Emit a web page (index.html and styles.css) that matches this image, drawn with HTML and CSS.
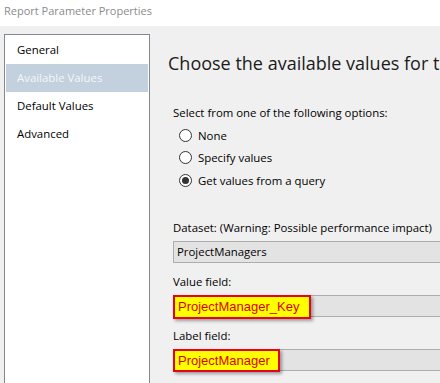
FILE: index.html
```html
<!DOCTYPE html>
<html>
<head>
<meta charset="utf-8">
<link rel="stylesheet" href="styles.css">
</head>
<body>
<div class="window">
  <div class="titlebar">Report Parameter Properties</div>
  <div class="main">
    <ul class="nav">
      <li class="nav-item">General</li>
      <li class="nav-item selected">Available Values</li>
      <li class="nav-item">Default Values</li>
      <li class="nav-item">Advanced</li>
    </ul>
    <div class="content">
      <h1 class="heading">Choose the available values for this parameter.</h1>
      <div class="prompt">Select from one of the following options:</div>
      <div class="options">
        <div class="option"><span class="radio"></span><span>None</span></div>
        <div class="option"><span class="radio"></span><span>Specify values</span></div>
        <div class="option"><span class="radio checked"></span><span>Get values from a query</span></div>
      </div>
      <div class="field-label first">Dataset: (Warning: Possible performance impact)</div>
      <div class="box"><span class="box-text">ProjectManagers</span></div>
      <div class="field-label">Value field:</div>
      <div class="box"><span class="mark mark-value">ProjectManager_Key</span></div>
      <div class="field-label">Label field:</div>
      <div class="box"><span class="mark mark-label">ProjectManager</span></div>
    </div>
  </div>
</div>
</body>
</html>
```
FILE: styles.css
```css
* { box-sizing: border-box; }
html, body {
  margin: 0;
  padding: 0;
  width: 440px;
  height: 383px;
  overflow: hidden;
  background: #f0f0f0;
}
.window {
  width: 440px;
  height: 383px;
  font-family: "Open Sans", "Noto Sans", sans-serif;
  font-size: 11.4px;
  color: #000;
}
.titlebar {
  height: 26px;
  background: #ffffff;
  color: #8c8c8c;
  font-size: 11px;
  line-height: 22px;
  padding-left: 4px;
}
.main {
  display: flex;
  height: 357px;
}
.nav {
  list-style: none;
  margin: 8px 0 0 4px;
  padding: 1px 1px 0 1px;
  width: 146px;
  height: 360px;
  flex: none;
  background: #fff;
  border: 1px solid #828790;
}
.nav-item {
  height: 28px;
  line-height: 27px;
  padding-left: 11px;
  color: #000;
}
.nav-item.selected {
  background: #c3d0dd;
  color: #f4f7fa;
}
.content {
  flex: none;
  width: 600px;
  padding-left: 23px;
}
.heading {
  margin: 24px 0 0 -5px;
  font-weight: normal;
  font-size: 18px;
  line-height: 26px;
  color: #1b1b1b;
  white-space: nowrap;
}
.prompt {
  margin-top: 29px;
  line-height: 16px;
}
.options {
  margin-top: 3px;
  padding-left: 6px;
}
.option {
  display: flex;
  align-items: center;
  height: 22.5px;
  gap: 6px;
}
.radio {
  width: 13px;
  height: 13px;
  border: 1px solid #333;
  border-radius: 50%;
  background: #fff;
  display: flex;
  align-items: center;
  justify-content: center;
}
.radio.checked::after {
  content: "";
  width: 7px;
  height: 7px;
  border-radius: 50%;
  background: #333;
}
.field-label {
  margin-top: 11px;
  line-height: 16px;
  margin-bottom: 5px;
}
.field-label.first {
  margin-top: 28px;
}
.box {
  position: relative;
  height: 22px;
  width: 400px;
  background: #e3e3e3;
  border: 1px solid #adadad;
  line-height: 20px;
  padding-left: 3px;
}
.mark {
  position: absolute;
  top: -1px;
  left: -1px;
  height: 24px;
  background: #ffff00;
  border: 2px solid #e8001c;
  color: #e00000;
  font-family: "Liberation Sans", Arial, sans-serif;
  font-size: 13px;
  line-height: 20px;
  padding: 0 10px 0 3px;
  box-shadow: 2px 2px 3px rgba(0,0,0,0.35);
  white-space: nowrap;
}
.mark-label {
  padding: 0 8px 0 3px;
  height: 23px;
}
```
